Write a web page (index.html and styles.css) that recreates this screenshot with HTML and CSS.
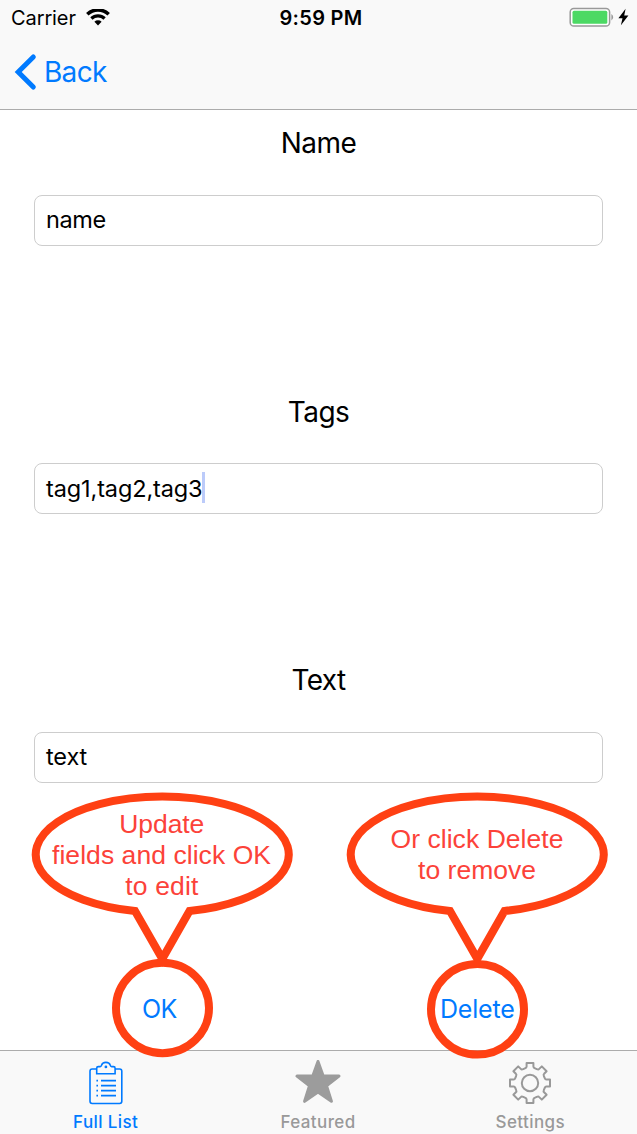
FILE: index.html
```
<!DOCTYPE html>
<html lang="en">
<head>
<meta charset="utf-8">
<title>Edit item</title>
<link rel="stylesheet" href="styles.css">
</head>
<body>
<div class="screen">
  <header class="header">
    <div class="status">
      <div class="status-left">
        <span class="carrier">Carrier</span>
        <svg class="wifi" width="24" height="18" viewBox="0 0 24 18">
          <path d="M1.3 5.3 A15.3 15.3 0 0 1 22.7 5.3" fill="none" stroke="#000" stroke-width="3.5"/>
          <path d="M5.4 9.5 A9.4 9.4 0 0 1 18.6 9.5" fill="none" stroke="#000" stroke-width="3.2"/>
          <path d="M8.4 12.8 A5.2 5.2 0 0 1 15.6 12.8 L12 16.4 Z" fill="#000"/>
        </svg>
      </div>
      <span class="time">9:59 PM</span>
      <div class="status-right">
        <svg width="62" height="22" viewBox="0 0 62 22">
          <rect x="1.2" y="1.4" width="39.4" height="17.6" rx="3.6" fill="#fff" stroke="#999" stroke-width="1.5"/>
          <rect x="3.5" y="3.7" width="34.8" height="13" rx="1.5" fill="#4cd964"/>
          <path d="M42.4 7 Q46 10.2 42.4 13.4 Z" fill="#999"/>
          <path d="M56.6 1.8 L49.4 11.3 H53.5 L51.9 18.3 L59.4 8.4 H55.2 Z" fill="#000"/>
        </svg>
      </div>
    </div>
    <nav class="nav">
      <svg width="24" height="38" viewBox="0 0 24 38"><path d="M19.3 3.9 L4.2 19 L19.3 34.1" fill="none" stroke="#007aff" stroke-width="5" stroke-linecap="round"/></svg>
      <span class="back">Back</span>
    </nav>
  </header>

  <main class="form">
    <section class="group">
      <h2 class="label">Name</h2>
      <div class="field"><span class="value">name</span></div>
    </section>
    <section class="group">
      <h2 class="label label-tags">Tags</h2>
      <div class="field field-tags"><span class="value value-tags">tag1,tag2,tag3</span><i class="caret"></i></div>
    </section>
    <section class="group last">
      <h2 class="label">Text</h2>
      <div class="field"><span class="value value-text">text</span></div>
    </section>
    <div class="actions">
      <span class="action ok">OK</span>
      <span class="action delete">Delete</span>
    </div>
  </main>

  <footer class="tabs">
    <div class="tab active">
      <svg width="36" height="46" viewBox="0 0 36 46" fill="none" stroke="#007aff" stroke-width="1.6">
        <path d="M8.7 9 H4.2 Q2 9 2 11.2 V41.3 Q2 43.5 4.2 43.5 H31.6 Q33.8 43.5 33.8 41.3 V11.2 Q33.8 9 31.6 9 H27.1"/>
        <path d="M8.7 13.8 V8.2 Q8.7 6.6 10.3 6.6 H12.2 Q13.2 6.6 13.5 5.4 C14 3.5 15.8 2.4 17.9 2.4 C20 2.4 21.8 3.5 22.3 5.4 Q22.6 6.6 23.6 6.6 H25.5 Q27.1 6.6 27.1 8.2 V13.8 Z"/>
        <circle cx="17.9" cy="6.9" r=".6" fill="#007aff"/>
        <path d="M13 20.6 H28 M13 25.6 H28 M13 30.6 H28 M13 35.6 H28 M8.4 20.6 H10 M8.4 25.6 H10 M8.4 30.6 H10 M8.4 35.6 H10"/>
      </svg>
      <span>Full List</span>
    </div>
    <div class="tab">
      <svg width="48" height="46" viewBox="0 0 48 46"><path d="M24 1.5 L29.2 16.1 H45 L32.5 25.8 L37.4 41.3 L24 32 L10.6 41.3 L15.5 25.8 L3 16.1 H18.8 Z" fill="#9c9c9c" stroke="#9c9c9c" stroke-width="3" stroke-linejoin="round"/></svg>
      <span>Featured</span>
    </div>
    <div class="tab">
      <svg width="46" height="46" viewBox="0 0 46 46" fill="none" stroke="#999" stroke-width="2" stroke-linejoin="round">
        <g transform="translate(23 23)">
          <path d="M-3.4 -20 H3.4 V-16.4 Q3.4 -15.2 5 -14.7 L6.8 -13.9 Q8.4 -13.2 9.2 -14.1 L11.8 -16.6 L16.6 -11.8 L14.1 -9.2 Q13.2 -8.4 13.9 -6.8 L14.7 -5 Q15.2 -3.4 16.4 -3.4 H20 V3.4 H16.4 Q15.2 3.4 14.7 5 L13.9 6.8 Q13.2 8.4 14.1 9.2 L16.6 11.8 L11.8 16.6 L9.2 14.1 Q8.4 13.2 6.8 13.9 L5 14.7 Q3.4 15.2 3.4 16.4 V20 H-3.4 V16.4 Q-3.4 15.2 -5 14.7 L-6.8 13.9 Q-8.4 13.2 -9.2 14.1 L-11.8 16.6 L-16.6 11.8 L-14.1 9.2 Q-13.2 8.4 -13.9 6.8 L-14.7 5 Q-15.2 3.4 -16.4 3.4 H-20 V-3.4 H-16.4 Q-15.2 -3.4 -14.7 -5 L-13.9 -6.8 Q-13.2 -8.4 -14.1 -9.2 L-16.6 -11.8 L-11.8 -16.6 L-9.2 -14.1 Q-8.4 -13.2 -6.8 -13.9 L-5 -14.7 Q-3.4 -15.2 -3.4 -16.4 Z"/>
          <circle r="8.2"/>
        </g>
      </svg>
      <span>Settings</span>
    </div>
  </footer>

  <svg class="callouts" width="637" height="1134" viewBox="0 0 637 1134">
    <g class="outline">
      <path d="M135 911 A126.5 57.9 0 1 1 189.5 911 L162.3 958.8 Z"/>
      <ellipse cx="162.5" cy="1008" rx="46.5" ry="45.2"/>
      <path d="M450 911 A126.5 57.9 0 1 1 504.5 911 L477.3 958.8 Z"/>
      <ellipse cx="477.5" cy="1009.3" rx="46.5" ry="45.2"/>
    </g>
    <g class="note">
      <text x="161.8" y="832.5" textLength="85">Update</text>
      <text x="161.5" y="863.5" textLength="219">fields and click OK</text>
      <text x="161.8" y="894.5" textLength="73">to edit</text>
      <text x="477" y="848" textLength="173">Or click Delete</text>
      <text x="477" y="879" textLength="118">to remove</text>
    </g>
  </svg>
</div>
</body>
</html>
```
FILE: styles.css
```
* { box-sizing: border-box; }
body { margin: 0; background: #fff; color: #000; font-family: Inter, "Liberation Sans", sans-serif; }
.screen { position: relative; width: 637px; height: 1134px; display: flex; flex-direction: column; overflow: hidden; }
.screen svg { display: block; }

.header { height: 110px; background: #f9f9f9; border-bottom: 1px solid #acacac; }
.status { height: 35px; display: grid; grid-template-columns: 1fr auto 1fr; align-items: center; font-size: 20px; padding: 0 6px 0 11px; }
.status-left { display: flex; align-items: center; gap: 10px; }
.carrier { letter-spacing: -0.1px; }
.time { font-weight: 600; letter-spacing: 0.3px; }
.status-right { display: flex; justify-content: flex-end; }
.nav { height: 74px; display: flex; align-items: center; padding-left: 13px; gap: 7px; color: #007aff; font-size: 28px; }
.nav svg { margin-left: 1px; margin-right: -1px; }
.back { letter-spacing: -0.7px; }

.form { height: 940px; padding: 0 34px; display: flex; flex-direction: column; }
.group { height: 268px; flex: none; }
.last { margin-top: 1px; }
.label { margin: 0; height: 85px; padding-top: 15px; line-height: 36px; font-size: 28px; font-weight: 400; letter-spacing: -0.6px; text-align: center; }
.label-tags { padding-top: 16px; }
.field { height: 51px; border: 1px solid #cdcdcd; border-radius: 8px; display: flex; align-items: center; padding: 0 0 2px 11px; font-size: 23.5px; }
.field-tags { padding-bottom: 0; }
.value { letter-spacing: -0.4px; }
.value-tags { letter-spacing: -0.12px; }
.value-text { letter-spacing: -0.1px; }
.caret { width: 3px; height: 31px; margin: 0 0 2px -1px; background: #bccbfa; }
.actions { flex: none; height: 40px; margin-top: 74px; display: flex; align-items: center; color: #007aff; font-size: 25px; }
.ok { margin-left: 108px; width: 298px; letter-spacing: -0.6px; }
.delete { letter-spacing: -0.2px; }

.tabs { height: 84px; background: #f9f9f9; border-top: 1px solid #acacac; display: grid; grid-template-columns: repeat(3, 1fr); font-size: 17px; font-weight: 500; color: #999; }
.tab { display: flex; flex-direction: column; align-items: center; padding: 9px 1px 0 0; }
.tab span { line-height: 22px; margin-top: 5px; letter-spacing: 0.4px; }
.active { color: #007aff; }

.callouts { position: absolute; inset: 0; }
.outline { fill: none; stroke: #ff4013; stroke-width: 8; }
.note { fill: #fc4239; font: 26.5px "Liberation Sans", sans-serif; text-anchor: middle; }
```
